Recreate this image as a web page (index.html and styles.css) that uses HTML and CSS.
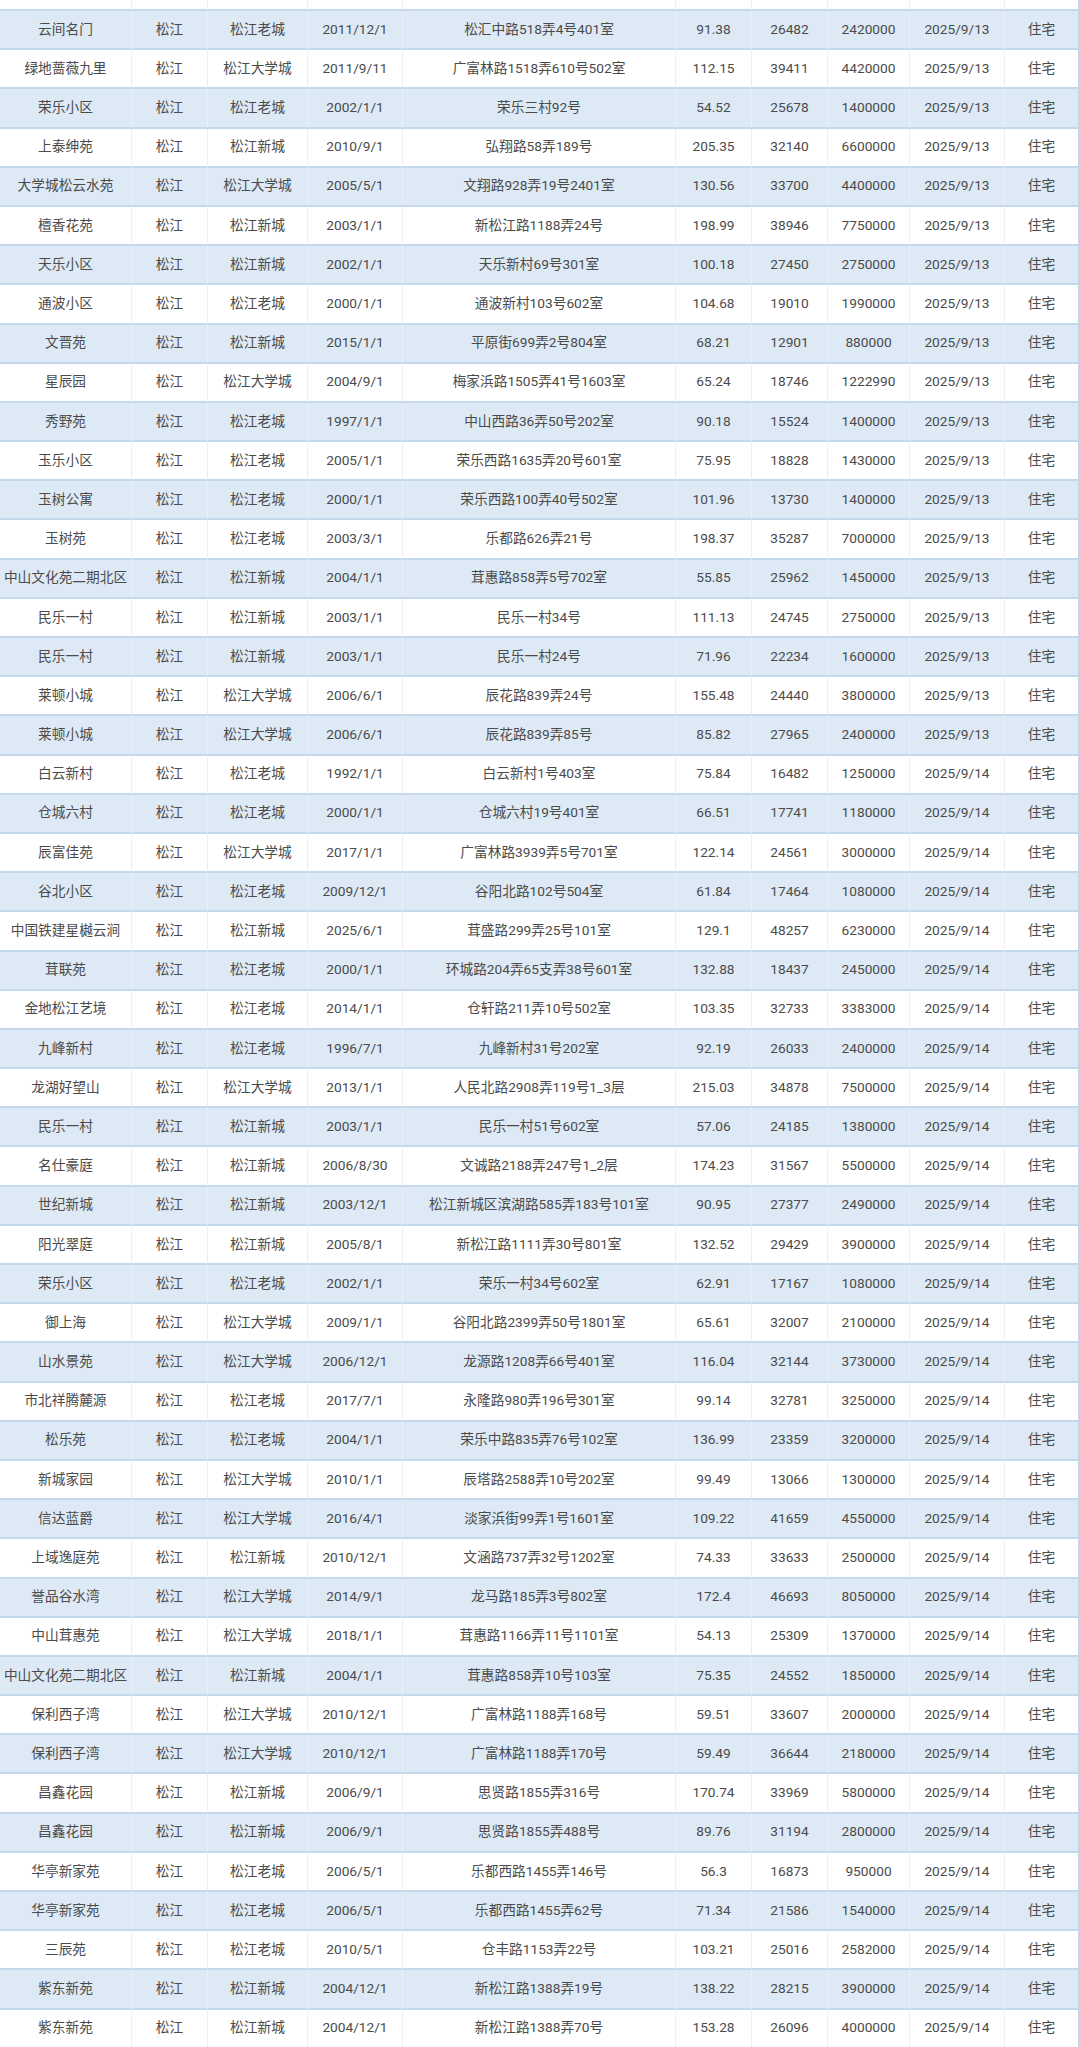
FILE: index.html
```html
<!DOCTYPE html>
<html lang="zh">
<head>
<meta charset="utf-8">
<title>松江成交记录</title>
<link rel="stylesheet" href="styles.css">
</head>
<body>
<table class="deals">
<colgroup>
<col class="c-name"><col class="c-dist"><col class="c-area"><col class="c-built"><col class="c-addr"><col class="c-size"><col class="c-unit"><col class="c-total"><col class="c-date"><col class="c-type">
</colgroup>
<tbody>
<tr class="stub"><td></td><td></td><td></td><td></td><td></td><td></td><td></td><td></td><td></td><td></td></tr>
<tr><td>云间名门</td><td>松江</td><td>松江老城</td><td>2011/12/1</td><td>松汇中路518弄4号401室</td><td>91.38</td><td>26482</td><td>2420000</td><td>2025/9/13</td><td>住宅</td></tr>
<tr><td>绿地蔷薇九里</td><td>松江</td><td>松江大学城</td><td>2011/9/11</td><td>广富林路1518弄610号502室</td><td>112.15</td><td>39411</td><td>4420000</td><td>2025/9/13</td><td>住宅</td></tr>
<tr><td>荣乐小区</td><td>松江</td><td>松江老城</td><td>2002/1/1</td><td>荣乐三村92号</td><td>54.52</td><td>25678</td><td>1400000</td><td>2025/9/13</td><td>住宅</td></tr>
<tr><td>上泰绅苑</td><td>松江</td><td>松江新城</td><td>2010/9/1</td><td>弘翔路58弄189号</td><td>205.35</td><td>32140</td><td>6600000</td><td>2025/9/13</td><td>住宅</td></tr>
<tr><td>大学城松云水苑</td><td>松江</td><td>松江大学城</td><td>2005/5/1</td><td>文翔路928弄19号2401室</td><td>130.56</td><td>33700</td><td>4400000</td><td>2025/9/13</td><td>住宅</td></tr>
<tr><td>檀香花苑</td><td>松江</td><td>松江新城</td><td>2003/1/1</td><td>新松江路1188弄24号</td><td>198.99</td><td>38946</td><td>7750000</td><td>2025/9/13</td><td>住宅</td></tr>
<tr><td>天乐小区</td><td>松江</td><td>松江新城</td><td>2002/1/1</td><td>天乐新村69号301室</td><td>100.18</td><td>27450</td><td>2750000</td><td>2025/9/13</td><td>住宅</td></tr>
<tr><td>通波小区</td><td>松江</td><td>松江老城</td><td>2000/1/1</td><td>通波新村103号602室</td><td>104.68</td><td>19010</td><td>1990000</td><td>2025/9/13</td><td>住宅</td></tr>
<tr><td>文晋苑</td><td>松江</td><td>松江新城</td><td>2015/1/1</td><td>平原街699弄2号804室</td><td>68.21</td><td>12901</td><td>880000</td><td>2025/9/13</td><td>住宅</td></tr>
<tr><td>星辰园</td><td>松江</td><td>松江大学城</td><td>2004/9/1</td><td>梅家浜路1505弄41号1603室</td><td>65.24</td><td>18746</td><td>1222990</td><td>2025/9/13</td><td>住宅</td></tr>
<tr><td>秀野苑</td><td>松江</td><td>松江老城</td><td>1997/1/1</td><td>中山西路36弄50号202室</td><td>90.18</td><td>15524</td><td>1400000</td><td>2025/9/13</td><td>住宅</td></tr>
<tr><td>玉乐小区</td><td>松江</td><td>松江老城</td><td>2005/1/1</td><td>荣乐西路1635弄20号601室</td><td>75.95</td><td>18828</td><td>1430000</td><td>2025/9/13</td><td>住宅</td></tr>
<tr><td>玉树公寓</td><td>松江</td><td>松江老城</td><td>2000/1/1</td><td>荣乐西路100弄40号502室</td><td>101.96</td><td>13730</td><td>1400000</td><td>2025/9/13</td><td>住宅</td></tr>
<tr><td>玉树苑</td><td>松江</td><td>松江老城</td><td>2003/3/1</td><td>乐都路626弄21号</td><td>198.37</td><td>35287</td><td>7000000</td><td>2025/9/13</td><td>住宅</td></tr>
<tr><td>中山文化苑二期北区</td><td>松江</td><td>松江新城</td><td>2004/1/1</td><td>茸惠路858弄5号702室</td><td>55.85</td><td>25962</td><td>1450000</td><td>2025/9/13</td><td>住宅</td></tr>
<tr><td>民乐一村</td><td>松江</td><td>松江新城</td><td>2003/1/1</td><td>民乐一村34号</td><td>111.13</td><td>24745</td><td>2750000</td><td>2025/9/13</td><td>住宅</td></tr>
<tr><td>民乐一村</td><td>松江</td><td>松江新城</td><td>2003/1/1</td><td>民乐一村24号</td><td>71.96</td><td>22234</td><td>1600000</td><td>2025/9/13</td><td>住宅</td></tr>
<tr><td>莱顿小城</td><td>松江</td><td>松江大学城</td><td>2006/6/1</td><td>辰花路839弄24号</td><td>155.48</td><td>24440</td><td>3800000</td><td>2025/9/13</td><td>住宅</td></tr>
<tr><td>莱顿小城</td><td>松江</td><td>松江大学城</td><td>2006/6/1</td><td>辰花路839弄85号</td><td>85.82</td><td>27965</td><td>2400000</td><td>2025/9/13</td><td>住宅</td></tr>
<tr><td>白云新村</td><td>松江</td><td>松江老城</td><td>1992/1/1</td><td>白云新村1号403室</td><td>75.84</td><td>16482</td><td>1250000</td><td>2025/9/14</td><td>住宅</td></tr>
<tr><td>仓城六村</td><td>松江</td><td>松江老城</td><td>2000/1/1</td><td>仓城六村19号401室</td><td>66.51</td><td>17741</td><td>1180000</td><td>2025/9/14</td><td>住宅</td></tr>
<tr><td>辰富佳苑</td><td>松江</td><td>松江大学城</td><td>2017/1/1</td><td>广富林路3939弄5号701室</td><td>122.14</td><td>24561</td><td>3000000</td><td>2025/9/14</td><td>住宅</td></tr>
<tr><td>谷北小区</td><td>松江</td><td>松江老城</td><td>2009/12/1</td><td>谷阳北路102号504室</td><td>61.84</td><td>17464</td><td>1080000</td><td>2025/9/14</td><td>住宅</td></tr>
<tr><td>中国铁建星樾云涧</td><td>松江</td><td>松江新城</td><td>2025/6/1</td><td>茸盛路299弄25号101室</td><td>129.1</td><td>48257</td><td>6230000</td><td>2025/9/14</td><td>住宅</td></tr>
<tr><td>茸联苑</td><td>松江</td><td>松江老城</td><td>2000/1/1</td><td>环城路204弄65支弄38号601室</td><td>132.88</td><td>18437</td><td>2450000</td><td>2025/9/14</td><td>住宅</td></tr>
<tr><td>金地松江艺境</td><td>松江</td><td>松江老城</td><td>2014/1/1</td><td>仓轩路211弄10号502室</td><td>103.35</td><td>32733</td><td>3383000</td><td>2025/9/14</td><td>住宅</td></tr>
<tr><td>九峰新村</td><td>松江</td><td>松江老城</td><td>1996/7/1</td><td>九峰新村31号202室</td><td>92.19</td><td>26033</td><td>2400000</td><td>2025/9/14</td><td>住宅</td></tr>
<tr><td>龙湖好望山</td><td>松江</td><td>松江大学城</td><td>2013/1/1</td><td>人民北路2908弄119号1_3层</td><td>215.03</td><td>34878</td><td>7500000</td><td>2025/9/14</td><td>住宅</td></tr>
<tr><td>民乐一村</td><td>松江</td><td>松江新城</td><td>2003/1/1</td><td>民乐一村51号602室</td><td>57.06</td><td>24185</td><td>1380000</td><td>2025/9/14</td><td>住宅</td></tr>
<tr><td>名仕豪庭</td><td>松江</td><td>松江新城</td><td>2006/8/30</td><td>文诚路2188弄247号1_2层</td><td>174.23</td><td>31567</td><td>5500000</td><td>2025/9/14</td><td>住宅</td></tr>
<tr><td>世纪新城</td><td>松江</td><td>松江新城</td><td>2003/12/1</td><td>松江新城区滨湖路585弄183号101室</td><td>90.95</td><td>27377</td><td>2490000</td><td>2025/9/14</td><td>住宅</td></tr>
<tr><td>阳光翠庭</td><td>松江</td><td>松江新城</td><td>2005/8/1</td><td>新松江路1111弄30号801室</td><td>132.52</td><td>29429</td><td>3900000</td><td>2025/9/14</td><td>住宅</td></tr>
<tr><td>荣乐小区</td><td>松江</td><td>松江老城</td><td>2002/1/1</td><td>荣乐一村34号602室</td><td>62.91</td><td>17167</td><td>1080000</td><td>2025/9/14</td><td>住宅</td></tr>
<tr><td>御上海</td><td>松江</td><td>松江大学城</td><td>2009/1/1</td><td>谷阳北路2399弄50号1801室</td><td>65.61</td><td>32007</td><td>2100000</td><td>2025/9/14</td><td>住宅</td></tr>
<tr><td>山水景苑</td><td>松江</td><td>松江大学城</td><td>2006/12/1</td><td>龙源路1208弄66号401室</td><td>116.04</td><td>32144</td><td>3730000</td><td>2025/9/14</td><td>住宅</td></tr>
<tr><td>市北祥腾麓源</td><td>松江</td><td>松江老城</td><td>2017/7/1</td><td>永隆路980弄196号301室</td><td>99.14</td><td>32781</td><td>3250000</td><td>2025/9/14</td><td>住宅</td></tr>
<tr><td>松乐苑</td><td>松江</td><td>松江老城</td><td>2004/1/1</td><td>荣乐中路835弄76号102室</td><td>136.99</td><td>23359</td><td>3200000</td><td>2025/9/14</td><td>住宅</td></tr>
<tr><td>新城家园</td><td>松江</td><td>松江大学城</td><td>2010/1/1</td><td>辰塔路2588弄10号202室</td><td>99.49</td><td>13066</td><td>1300000</td><td>2025/9/14</td><td>住宅</td></tr>
<tr><td>信达蓝爵</td><td>松江</td><td>松江大学城</td><td>2016/4/1</td><td>淡家浜街99弄1号1601室</td><td>109.22</td><td>41659</td><td>4550000</td><td>2025/9/14</td><td>住宅</td></tr>
<tr><td>上域逸庭苑</td><td>松江</td><td>松江新城</td><td>2010/12/1</td><td>文涵路737弄32号1202室</td><td>74.33</td><td>33633</td><td>2500000</td><td>2025/9/14</td><td>住宅</td></tr>
<tr><td>誉品谷水湾</td><td>松江</td><td>松江大学城</td><td>2014/9/1</td><td>龙马路185弄3号802室</td><td>172.4</td><td>46693</td><td>8050000</td><td>2025/9/14</td><td>住宅</td></tr>
<tr><td>中山茸惠苑</td><td>松江</td><td>松江大学城</td><td>2018/1/1</td><td>茸惠路1166弄11号1101室</td><td>54.13</td><td>25309</td><td>1370000</td><td>2025/9/14</td><td>住宅</td></tr>
<tr><td>中山文化苑二期北区</td><td>松江</td><td>松江新城</td><td>2004/1/1</td><td>茸惠路858弄10号103室</td><td>75.35</td><td>24552</td><td>1850000</td><td>2025/9/14</td><td>住宅</td></tr>
<tr><td>保利西子湾</td><td>松江</td><td>松江大学城</td><td>2010/12/1</td><td>广富林路1188弄168号</td><td>59.51</td><td>33607</td><td>2000000</td><td>2025/9/14</td><td>住宅</td></tr>
<tr><td>保利西子湾</td><td>松江</td><td>松江大学城</td><td>2010/12/1</td><td>广富林路1188弄170号</td><td>59.49</td><td>36644</td><td>2180000</td><td>2025/9/14</td><td>住宅</td></tr>
<tr><td>昌鑫花园</td><td>松江</td><td>松江新城</td><td>2006/9/1</td><td>思贤路1855弄316号</td><td>170.74</td><td>33969</td><td>5800000</td><td>2025/9/14</td><td>住宅</td></tr>
<tr><td>昌鑫花园</td><td>松江</td><td>松江新城</td><td>2006/9/1</td><td>思贤路1855弄488号</td><td>89.76</td><td>31194</td><td>2800000</td><td>2025/9/14</td><td>住宅</td></tr>
<tr><td>华亭新家苑</td><td>松江</td><td>松江老城</td><td>2006/5/1</td><td>乐都西路1455弄146号</td><td>56.3</td><td>16873</td><td>950000</td><td>2025/9/14</td><td>住宅</td></tr>
<tr><td>华亭新家苑</td><td>松江</td><td>松江老城</td><td>2006/5/1</td><td>乐都西路1455弄62号</td><td>71.34</td><td>21586</td><td>1540000</td><td>2025/9/14</td><td>住宅</td></tr>
<tr><td>三辰苑</td><td>松江</td><td>松江老城</td><td>2010/5/1</td><td>仓丰路1153弄22号</td><td>103.21</td><td>25016</td><td>2582000</td><td>2025/9/14</td><td>住宅</td></tr>
<tr><td>紫东新苑</td><td>松江</td><td>松江新城</td><td>2004/12/1</td><td>新松江路1388弄19号</td><td>138.22</td><td>28215</td><td>3900000</td><td>2025/9/14</td><td>住宅</td></tr>
<tr><td>紫东新苑</td><td>松江</td><td>松江新城</td><td>2004/12/1</td><td>新松江路1388弄70号</td><td>153.28</td><td>26096</td><td>4000000</td><td>2025/9/14</td><td>住宅</td></tr>
</tbody>
</table>
</body>
</html>
```

FILE: styles.css
```css
html, body {
  margin: 0;
  padding: 0;
  background: #ffffff;
}

.deals {
  width: 1080px;
  table-layout: fixed;
  border-collapse: separate;
  border-spacing: 0;
  border-right: 2px solid #bfd6ec;
  font-family: "Roboto", "Noto Sans CJK SC", sans-serif;
  font-size: 13.7px;
  color: #4b4b4b;
}

.c-name { width: 132px; }
.c-dist { width: 76px; }
.c-area { width: 100px; }
.c-built { width: 95px; }
.c-addr { width: 273px; }
.c-size { width: 76px; }
.c-unit { width: 76px; }
.c-total { width: 82px; }
.c-date { width: 95px; }
.c-type { width: 73px; }

.deals td {
  height: 37.2px;
  padding: 0;
  text-align: center;
  vertical-align: middle;
  white-space: nowrap;
  border-bottom: 2px solid #c2d8ed;
  border-right: 1px solid #eceef1;
  background: #ffffff;
  line-height: 1;
}

.deals td:last-child {
  border-right: none;
}

.deals tr:nth-child(even) td {
  background: #dde9f5;
  border-right-color: #e6eff8;
}

.deals tr:nth-child(even) td:last-child {
  border-right: none;
}

.deals tr.stub td {
  height: 9px;
}
```
